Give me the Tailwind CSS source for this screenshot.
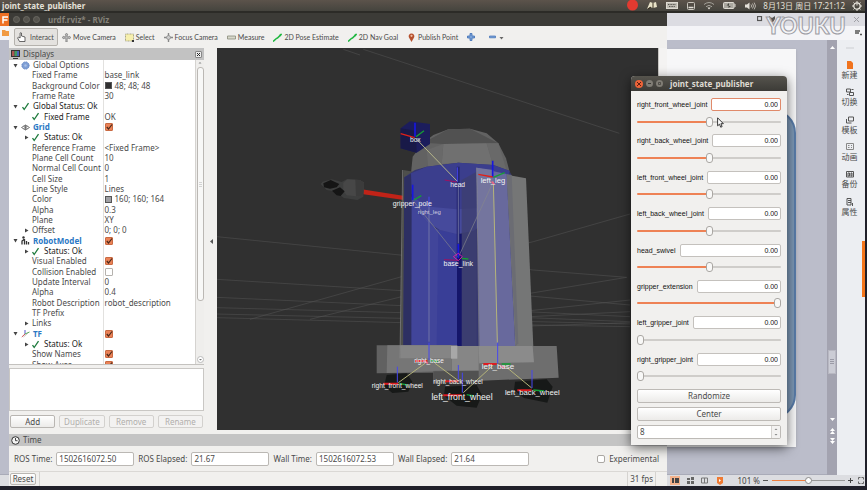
<!DOCTYPE html>
<html lang="en">
<head>
<meta charset="utf-8">
<title>joint_state_publisher</title>
<script src="https://cdn.jsdelivr.net/npm/@tailwindcss/browser@4"></script>
</head>
<body class="bg-[#20202a]">
<div class="relative flex min-h-screen flex-col overflow-hidden pr-[2px] pb-1 font-['Noto_Sans','Noto_Sans_CJK_SC',sans-serif] text-[8px] leading-[10px] text-[#4a4a4a]">

  <!-- system bar -->
  <header class="flex h-[13px] shrink-0 items-center justify-between border-b-2 border-[#2c2b27] bg-linear-to-b from-[#5c534b] to-[#45443e] pr-[3px] pl-[2px] text-[#e4e0d8]">
    <span class="font-bold">joint_state_publisher</span>
    <div class="flex items-center gap-[9px]">
      <svg class="size-[11px]" viewBox="0 0 11 11"><circle cx="5.500" cy="5" r="5.500" fill="#e23a30"/></svg>
      <svg class="h-[9px] w-[10px]" viewBox="0 0 10 9"><path d="M0 8 3 1l3 1 3-1 1 5-4 1-3-1z" fill="#e8e2c8"/><path d="M6 2v5M1 8l3-2" stroke="#3a3020"/></svg>
      <svg class="h-[7px] w-[12px]" viewBox="0 0 12 7"><rect x=".5" y=".5" width="11" height="6" fill="#bdbab2" stroke="#dedad2"/><path d="M2 2.500h8M3 4.500h6" stroke="#56534d" stroke-dasharray="1 .6"/></svg>
      <svg class="h-[8px] w-[8px]" viewBox="0 0 8 8"><rect x=".5" y=".5" width="7" height="7" rx="1" fill="none" stroke="#c9c5bd"/><path d="M1.500 5.500h5" stroke="#e2ded6" stroke-width="1.500"/></svg>
      <svg class="h-[8px] w-[10px]" viewBox="0 0 10 8"><path d="M0 2.500Q5-1.500 10 2.500M2 4.700Q5 2 8 4.700" fill="none" stroke="#a5a29a"/><path d="M3.500 5.500h3L5 7.500z" fill="#eeeae2"/></svg>
      <svg class="h-[7px] w-[13px]" viewBox="0 0 13 7"><rect x=".5" y=".5" width="10.500" height="6" rx="1" fill="#aaa79f" stroke="#dedad2"/><path d="M12 2v3" stroke="#dedad2"/><path d="M6 1v3h2L5.500 6V3.500h-2z" fill="#45443e"/></svg>
      <div class="flex items-center gap-[7px]">
        <svg class="h-[8px] w-[11px]" viewBox="0 0 11 8"><path d="M0 2.500h2L4.500.5v7L2 5.500H0z" fill="#e4e0d8"/><path d="M6 2.500q1.200 1.500 0 3M7.500 1.500q2 2.500 0 5M9.200.6q2.600 3.400 0 6.800" fill="none" stroke="#d0ccc4" stroke-width=".8"/></svg>
        <time class="whitespace-nowrap">8月13日 周日 17:21:12</time>
        <svg class="size-[10px]" viewBox="0 0 10 10"><circle cx="5" cy="5" r="3.200" fill="none" stroke="#e4e0d8" stroke-width="1.300"/><path d="M5 0v4.500M5 8v2M0 5h2M8 5h2M1.500 1.500l1.300 1.300M8.500 1.500 7.200 2.800M1.500 8.500l1.300-1.300M8.500 8.500 7.200 7.200" stroke="#e4e0d8"/></svg>
      </div>
    </div>
  </header>

  <!-- presentation editor behind the other windows -->
  <main class="flex flex-1 flex-col bg-[#bbbdca]">
    <div class="flex h-[13px] items-center justify-end bg-[#dcdce2]">
      <div class="mr-auto flex h-full w-[9px] items-center bg-[#ee7024]"><svg class="size-[9px]" viewBox="0 0 9 9"><path d="M3 8.500V2h5M3 5h4.500" fill="none" stroke="#fff" stroke-width="1.500"/></svg></div>
      <svg class="mr-[66px] h-[7px] w-[30px]" viewBox="0 0 30 7"><rect x=".5" y=".5" width="4" height="4" fill="none" stroke="#555" stroke-width="1.200"/><path d="M12 0l3 2 3-2v3l-2 3h-2l-2-3z" fill="#555"/><path d="M25 1q3-1 3 2l-2 2" stroke="#999" fill="none"/></svg>
      <button class="mr-[5px] text-[#a0a0a6]" aria-label="Close"><svg class="size-[7px]" viewBox="0 0 7 7"><path d="M1 1l5 5M6 1 1 6" stroke="currentColor"/></svg></button>
    </div>
    <div class="flex h-[14px] items-center justify-between bg-[#f4f4f7]">
      <svg class="ml-[2px] h-[6px] w-[7px]" viewBox="0 0 7 6"><path d="M0 0h3l1 1h3v5H0z" fill="#f19a43"/></svg>
      <svg class="mr-[3px] h-[6px] w-[7px]" viewBox="0 0 7 6"><path d="M0 1h5M0 3h4M5 4.500h2" stroke="#555" stroke-width="1.400"/></svg>
    </div>
    <div class="flex flex-1">
      <div class="flex flex-1 justify-end border-b border-[#a9abb8] pt-[9px] pr-[31px]">
        <div class="h-[398px] w-[140px] overflow-hidden bg-[#f7f7f8] pt-[60px] shadow">
          <div class="ml-auto h-[310px] w-[134px] rounded-r-[24px] border-2 border-[#587ba8] bg-[#7c97b4]"></div>
        </div>
      </div>
      <div class="flex w-[10px] flex-col items-center bg-[#a3a3b0] pt-[6px]">
        <svg class="h-[3px] w-[5px]" viewBox="0 0 5 3"><path d="M0 3 2.500 0 5 3z" fill="#fff"/></svg>
        <div class="mt-[301px] flex h-[24px] w-[8px] items-center justify-center border border-[#b8b8c2] bg-[#cbccd5]"><svg class="h-[6px] w-[4px]" viewBox="0 0 4 6"><path d="M0 .5h4M0 2.500h4M0 4.500h4" stroke="#9a9aa6"/></svg></div>
        <svg class="mt-[44px] h-[26px] w-[5px]" viewBox="0 0 5 26"><path d="M0 0h5L2.500 3zM0 13l2.500-3L5 13zM0 16l2.500-3L5 16zM0 20h5L2.500 23zM0 23h5l-2.500 3z" fill="#fff"/></svg>
      </div>
      <aside class="relative flex w-[28px] flex-col bg-[#eceef2] pt-[7px] pr-[3px]">
        <div class="mx-auto mb-[6px] h-[2px] w-[8px] bg-[#dcdee2]"></div>
        <nav id="side" class="grid h-[164px] auto-rows-fr text-center text-[#4a4a4a]"></nav>
        <div class="absolute top-[201px] right-0 h-[56px] w-[3px] bg-[#f5761b]"></div>
      </aside>
    </div>
    <div class="flex h-[11px] items-center justify-end bg-[#dcdde1]">
      <svg class="mr-[14px] h-[9px] w-[54px]" viewBox="0 0 54 9"><path d="M0 0h10v9H0z" fill="#f4b28c"/><path d="M2 2h2v5H2zM5 2h4v5H5z" fill="#444"/><path d="M17 2h3v2h-3zM21 1h3v3h-3zM17 5h3v3h-3zM21 5h3v3h-3z" fill="#666"/><path d="M31.500 2h6v5h-6zM34.500 2v5" fill="none" stroke="#777"/><path d="M47 1h6v6l-3 2-3-2z" fill="#ef7a33"/><path d="M49 3v3l2-1.500z" fill="#fff"/></svg>
      <span class="mr-[3px] text-[#444]">101 %</span>
      <svg class="mr-[4px] h-[7px] w-[5px]" viewBox="0 0 5 7"><path d="M0 3.500h5" stroke="#555"/></svg>
      <input type="range" value="50" aria-label="Zoom" class="h-[8px] w-[73px] appearance-none bg-transparent [&::-webkit-slider-runnable-track]:h-px [&::-webkit-slider-runnable-track]:bg-linear-to-r [&::-webkit-slider-runnable-track]:from-[#ef7f40] [&::-webkit-slider-runnable-track]:from-50% [&::-webkit-slider-runnable-track]:to-[#999] [&::-webkit-slider-runnable-track]:to-50% [&::-webkit-slider-thumb]:-mt-[3px] [&::-webkit-slider-thumb]:size-[7px] [&::-webkit-slider-thumb]:appearance-none [&::-webkit-slider-thumb]:rounded-full [&::-webkit-slider-thumb]:border [&::-webkit-slider-thumb]:border-[#888] [&::-webkit-slider-thumb]:bg-white">
      <svg class="mr-[1px] ml-[3px] h-[7px] w-[16px]" viewBox="0 0 16 7"><path d="M0 3.500h5M2.500 1v5" stroke="#444"/><path d="M10.500 2.500v-2h2M13.500.5h2v2M15.500 4.500v2h-2M12.500 6.500h-2v-2" fill="none" stroke="#666"/></svg>
    </div>
  </main>

  <!-- RViz window -->
  <section class="absolute top-[13px] right-[200px] bottom-1 left-[9px] flex flex-col bg-[#f1f0ee]">
    <div class="flex h-[13px] shrink-0 items-center gap-[3px] bg-[#3c3b37] pl-[4px] font-bold text-[#85827a]">
      <button aria-label="Close" class="flex size-[7px] items-center justify-center rounded-full border border-[#6a6861] bg-[#55534d]"></button>
      <button aria-label="Minimize" class="flex size-[7px] items-center justify-center rounded-full border border-[#6a6861] bg-[#55534d]"></button>
      <button aria-label="Maximize" class="flex size-[7px] items-center justify-center rounded-full border border-[#6a6861] bg-[#55534d]"></button>
      <h1 class="ml-[5px]">urdf.rviz* - RViz</h1>
    </div>

    <div class="flex h-[22px] shrink-0 items-center gap-[9px] pl-[5px] font-[Lato,sans-serif] text-[7px] whitespace-nowrap">
      <button class="-mr-[5px] flex h-[18px] w-[44px] items-center gap-[4px] rounded-[2px] border border-[#b5b2ad] bg-[#e4e2df] pl-[2px]"><svg class="h-[10px] w-[9px]" viewBox="0 0 9 10"><path d="M2.500 9.500h5.500V5L4.500 4V1q-.7-1-1.400 0v5L1.500 5 .6 6z" fill="#fff" stroke="#444" stroke-width=".8"/></svg>Interact</button>
      <button class="flex items-center gap-[2px]"><svg class="size-[9px]" viewBox="0 0 9 9"><path d="M4.500 0 6 2H5.200v1.800H7V3l2 1.500L7 6v-.8H5.200V9H3.800V5.200H2V6L0 4.500 2 3v.8h1.800V2H3z" fill="#bbb" stroke="#777" stroke-width=".6"/></svg>Move Camera</button>
      <button class="flex items-center gap-[2px]"><svg class="size-[9px]" viewBox="0 0 9 9"><path d="M.5 1h8v7h-8z" fill="#f6efad" stroke="#8d8a68" stroke-width=".7" stroke-dasharray="1 .5"/><path d="M7 7h2v2H7z" fill="#333"/></svg>Select</button>
      <button class="flex items-center gap-[2px]"><svg class="size-[9px]" viewBox="0 0 9 9"><path d="M4.500 0v9M0 4.500h9" stroke="#888" stroke-width="1.400"/><circle cx="4.500" cy="4.500" r="2" fill="#ccc" stroke="#888" stroke-width=".7"/></svg>Focus Camera</button>
      <button class="flex items-center gap-[2px]"><svg class="size-[9px]" viewBox="0 0 9 9"><path d="M.5 3h8v3h-8z" fill="#d8d8cc" stroke="#888a78" stroke-width=".8"/></svg>Measure</button>
      <button class="flex items-center gap-[2px]"><svg class="size-[9px]" viewBox="0 0 9 9"><path d="M0 8.500 4 5M4 5.500 8.500 1" stroke="#20b840" stroke-width="1.600"/><path d="M9 .5 6 2l1.500 1.500z" fill="#20b840"/></svg>2D Pose Estimate</button>
      <button class="flex items-center gap-[2px]"><svg class="size-[9px]" viewBox="0 0 9 9"><path d="M0 8.500 4 5M4 5.500 8.500 1" stroke="#20b840" stroke-width="1.600"/><path d="M9 .5 6 2l1.500 1.500z" fill="#20b840"/></svg>2D Nav Goal</button>
      <button class="flex items-center gap-[2px]"><svg class="size-[9px]" viewBox="0 0 9 9"><path d="M4.500 9 2 4.500a2.800 2.800 0 1 1 5 0z" fill="#b5502d"/><circle cx="4.500" cy="2.800" r="1.100" fill="#f0c0a8"/></svg>Publish Point</button>
      <button aria-label="Add tool"><svg class="size-[8px]" viewBox="0 0 8 8"><path d="M3 .5h2V3h2.500v2H5v2.500H3V5H.5V3H3z" fill="#7aa2d8" stroke="#3f6fb5" stroke-width=".8"/></svg></button>
      <button aria-label="Remove tool" class="ml-[5px]"><svg class="h-[6px] w-[15px]" viewBox="0 0 15 6"><path d="M.5 2h6v1.800h-6z" fill="#7aa2d8" stroke="#3f6fb5" stroke-width=".7"/><path d="M10.500 3h4l-2 2.500z" fill="#666"/></svg></button>
    </div>

    <div class="flex min-h-0 flex-1">
      <div class="flex w-[195px] shrink-0 flex-col">
        <div class="flex h-[12px] items-center gap-[3px] bg-[#c2c2c2] px-[2px]">
          <svg class="h-[9px] w-[9px]" viewBox="0 0 9 9"><path d="M0 0h9v7H0z" fill="#333"/><path d="M1 1h2.500v5H1z" fill="#a55"/><path d="M3.500 1H6v5H3.500z" fill="#3f9a65"/><path d="M6 1h2v5H6z" fill="#4b62b8"/><path d="M2 8.500h5" stroke="#333"/></svg>
          <h2 class="mr-auto">Displays</h2>
          <button aria-label="Close panel" class="flex size-[7px] items-center justify-center rounded-[1px] border border-[#888] bg-[#eee]"><svg class="size-[3px]" viewBox="0 0 3 3"><path d="M0 0l3 3M3 0 0 3" stroke="#222"/></svg></button>
        </div>
        <div class="flex h-[305px] overflow-hidden border-b border-[#c4c2bf] bg-white">
          <div class="min-w-0 flex-1"><table class="h-[310px] w-full table-fixed border-collapse"><tbody id="tree"></tbody></table></div>
          <div class="flex w-[9px] flex-col items-center gap-[2px] border-l border-[#d5d3d0] bg-[#efeeec] pb-[1px]">
            <svg class="h-[5px] w-[6px]" viewBox="0 0 6 5"><path d="M1.500 3.500 3 2l1.500 1.500z" fill="#888"/></svg>
            <div class="flex h-[234px] w-[7px] items-center justify-center rounded-[3px] border border-[#bbb8b4] bg-[#f8f8f7]"><svg class="h-[5px] w-[3px]" viewBox="0 0 3 5"><path d="M0 .5h3M0 2.500h3M0 4.500h3" stroke="#bbb" stroke-width=".6"/></svg></div>
            <svg class="mt-auto size-[7px]" viewBox="0 0 7 7"><circle cx="3.500" cy="3.500" r="3" fill="#fff" stroke="#bbb"/><path d="M2 3h3L3.500 4.600z" fill="#777"/></svg>
          </div>
        </div>
        <div class="mt-[3px] flex-1 border border-[#c9c7c4] bg-white"></div>
        <div class="mt-[4px] mb-[6px] grid h-[13px] shrink-0 grid-cols-4 gap-[4px] px-[1px] text-[#b0aeab]">
          <button class="rounded-[2px] border border-[#b9b6b2] bg-linear-to-b from-white to-[#ecebe9] text-[#4a4a4a]">Add</button>
          <button disabled class="rounded-[2px] border border-[#d3d1ce] bg-[#f3f2f1]">Duplicate</button>
          <button disabled class="rounded-[2px] border border-[#d3d1ce] bg-[#f3f2f1]">Remove</button>
          <button disabled class="rounded-[2px] border border-[#d3d1ce] bg-[#f3f2f1]">Rename</button>
        </div>
      </div>
      <div class="flex w-[13px] shrink-0 items-center justify-center"><svg class="ml-[2px] h-[5px] w-[3px]" viewBox="0 0 3 5"><path d="M3 0v5L0 2.500z" fill="#555"/></svg></div>

      <!-- 3D view -->
      <div class="mb-[4px] min-w-0 flex-1 bg-[#303030]">
        <svg class="size-full" viewBox="21 24 1323 1146" preserveAspectRatio="xMidYMid slice" font-family="Liberation Sans, sans-serif" text-anchor="middle">
          <g stroke="#585858" stroke-width="2" fill="none">
            <path d="M460 28 1228 280M400 28 450 45M20 590 600 648 970 690 1250 712M760 655 970 605 1260 522M20 718 575 752 960 768 1260 795M20 772 575 797 1260 830M20 803 575 818 1260 845M20 822 575 835 1260 852M20 833 575 848 1260 860M120 838 575 710M300 838 575 770M960 760 1250 712M960 812 1260 780M960 830 1260 815M960 858 1260 848" opacity=".75"/>
          </g>
          <!-- gripper -->
          <path d="M455 448 608 472v12L455 462z" fill="#c02318"/>
          <path d="M338 425 365 418l30 8 15-8 40 2 12 8-2 42-18 10-40-6-30-20-22-4-18-18z" fill="#3d3e3e"/>
          <path d="M400 428 412 418l38 2 12 8-2 34-8 8-42-4-10-14z" fill="#474747"/>
          <path d="M436 420l14 0 12 8-2 34-8 8-14-1z" fill="#3b3b3b"/>
          <path d="M340 430l22-10 26 12-8 10-20 4-18-4zM366 452l24-10 14 12-12 14-12-2z" fill="#151515"/>
          <!-- wheels -->
          <g fill="#171918"><path d="M530 1005 590 1000l17 25-12 30-48 4-25-20z"/><path d="M705 1040 800 1035l16 30-16 38-60-6-38-30z"/><path d="M915 1025 1010 1018l18 22-16 48-70-14-30-24z"/></g>
          <!-- head dome -->
          <path d="M603 400 608 350 640 308 670 285 715 268 780 266 830 280 865 310 888 355 900 400 890 450 870 500 840 545 790 572 740 582 690 570 650 545 620 510 605 460z" fill="#626262"/>
          <path d="M640 308 715 268 780 266 865 310 700 312z" fill="#515151"/>
          <path d="M700 312 830 310 850 378 745 368 695 372z" fill="#707070"/>
          <path d="M650 330 700 312 695 372 655 385zM830 310 865 310 890 392 850 378z" fill="#696969"/>
          <!-- right leg behind the body -->
          <path d="M580 390 610 395 605 955 570 955z" fill="#4e4f4c"/>
          <!-- body -->
          <path d="M583 412 615 390 650 380 745 368 850 375 898 392 912 420 918 918H580z" fill="#35376f"/>
          <path d="M583 412 640 384 608 918H580z" fill="#2d2f62"/>
          <path d="M605 470 625 520 680 568 745 582V918H604z" fill="#41459a"/>
          <path d="M685 570 742 582V918H680z" fill="#393e97"/>
          <path d="M603 400 650 380 745 368 850 375 898 392 890 450 870 500 840 545 790 572 740 582 690 570 650 545 620 510 605 460z" fill="#3b3e8d"/>
          <path d="M605 470 660 500 740 508 800 505 850 530 790 572 740 582 690 570 650 545 620 510z" fill="#464a9c"/>
          <path d="M755 420 800 395V918H755z" fill="#3d3e70" opacity=".8"/>
          <path d="M741 582h14V918h-14z" fill="#15166a"/>
          <path d="M740 380h9V640h-9z" fill="#252773"/>
          <!-- left leg -->
          <path d="M890 404 948 415 972 967 918 968z" fill="#757676"/>
          <path d="M800 383 890 402 918 968 810 970z" fill="#68699d"/>
          <path d="M800 383 850 390 865 968 810 970z" fill="#74759e"/>
          <path d="M890 402 905 405 925 910 918 918z" fill="#6b6c73"/>
          <!-- bases -->
          <path d="M500 916H725V990L670 998 500 1000z" fill="#616161"/>
          <path d="M532 916H725V992L530 999z" fill="#767676"/>
          <path d="M572 916H742V955H572z" fill="#858585"/>
          <path d="M725 918 1040 918 1046 1013 670 1028V992L725 990z" fill="#6e6e6e"/>
          <path d="M725 918H806V992H725z" fill="#868686"/>
          <path d="M806 918H968L972 967 808 970z" fill="#8b8b8b"/>
          <path d="M723 918H742V956H723z" fill="#a8a8a8"/>
          <path d="M670 994 806 992V1022L670 1028z" fill="#515151"/>
          <path d="M570 955 578 390M800 383 808 970" stroke="#8c8c8c" stroke-width="2" fill="none"/>
          <!-- box on the head -->
          <path d="M572 265 600 244 660 252V312L620 338 572 325z" fill="#1c1d5c"/>
          <path d="M572 265 618 272 620 338 572 325z" fill="#181948"/>
          <!-- frame links -->
          <g fill="none" stroke-width="3">
            <path d="M620 298 742 424" stroke="#b5b58a"/>
            <path d="M850 425 862 908M565 1028 645 970M675 970 745 1022M760 1058 850 975M885 978 965 1044" stroke="#b5b47a"/>
            <path d="M612 485 745 652 850 425" stroke="#85868c" stroke-width="2"/>
            <path d="M657 500V905M745 430V610" stroke="#8a8cb0" stroke-width="2"/>
          </g>
          <!-- axes -->
          <g fill="none" stroke-width="5">
            <path d="M615 248V290M608 434V480M848 362V412M745 612V655" stroke="#1717e0"/>
            <path d="M742 382V425M657 470V500M657 908V960M863 908V970M562 980V1028M757 998V1058M966 990V1044M745 975V1018" stroke="#4646ee" stroke-width="3"/>
            <path d="M572 281 614 293M805 403 848 411" stroke="#e02018" stroke-width="4"/>
            <path d="M520 1031H565M700 1066H755M922 1051H965M705 1024H745M820 972H860M615 963H652" stroke="#dc1c22" stroke-width="6"/>
            <path d="M702 659 745 661M704 420 740 426" stroke="#a01060" stroke-width="3"/>
            <path d="M730 650l15-10 12 10-12 12z" stroke="#d020a8" stroke-width="3"/>
            <path d="M618 290 642 272M612 480 634 467M850 412 884 398M755 655 775 657M567 1030 592 1035M770 1064 792 1068M970 1050 1002 1053M875 972H902M662 962 684 964" stroke="#159e35" stroke-width="4"/>
            <path d="M845 425l8 8M640 962l14 8M870 978l14 6" stroke="#ea6088"/>
          </g>
          <g fill="#f2f2f2">
            <text x="616" y="306" font-size="20">box</text>
            <text x="743" y="441" font-size="20">head</text>
            <text x="849" y="429" font-size="23">left_leg</text>
            <text x="607" y="497" font-size="21">gripper_pole</text>
            <text x="658" y="521" font-size="18" fill="#d0d0e0">right_leg</text>
            <text x="745" y="677" font-size="21">base_link</text>
            <text x="657" y="970" font-size="19">right_base</text>
            <text x="864" y="986" font-size="24">left_base</text>
            <text x="562" y="1043" font-size="20">right_front_wheel</text>
            <text x="744" y="1033" font-size="19">right_back_wheel</text>
            <text x="756" y="1081" font-size="26">left_front_wheel</text>
            <text x="967" y="1066" font-size="23">left_back_wheel</text>
          </g>
        </svg>
      </div>
      <div class="w-[9px] shrink-0 border-l border-[#c9c7c4] bg-[#f4f3f2]"></div>
    </div>

    <div class="flex h-[12px] shrink-0 items-center gap-[3px] bg-[#c4c4c4] pl-[2px]">
      <svg class="size-[9px]" viewBox="0 0 9 9"><circle cx="4.500" cy="4.500" r="3.800" fill="#f4f4f4" stroke="#333"/><path d="M4.500 2v2.700h2" fill="none" stroke="#333" stroke-width=".9"/></svg>
      <h2>Time</h2>
    </div>
    <div class="flex h-[26px] shrink-0 items-center gap-[4px] border-b border-[#dad8d5] pr-[8px] pl-[5px] whitespace-nowrap">
      <label for="rt">ROS Time:</label><input id="rt" value="1502616072.50" class="h-[14px] w-[78px] rounded-[2px] border border-[#bbb8b4] bg-white px-[2px]">
      <label for="re">ROS Elapsed:</label><input id="re" value="21.67" class="h-[14px] w-[78px] rounded-[2px] border border-[#bbb8b4] bg-white px-[2px]">
      <label for="wt">Wall Time:</label><input id="wt" value="1502616072.53" class="h-[14px] w-[78px] rounded-[2px] border border-[#bbb8b4] bg-white px-[2px]">
      <label for="we">Wall Elapsed:</label><input id="we" value="21.64" class="h-[14px] w-[78px] rounded-[2px] border border-[#bbb8b4] bg-white px-[2px]">
      <input id="ex" type="checkbox" class="ml-auto size-[8px] appearance-none rounded-[2px] border border-[#aaa7a3] bg-white"><label for="ex">Experimental</label>
    </div>
    <div class="flex h-[14px] shrink-0 items-center justify-between pr-[11px] pl-[1px]">
      <button class="h-[12px] w-[26px] rounded-[2px] border border-[#b9b6b2] bg-linear-to-b from-white to-[#ecebe9]">Reset</button>
      <div class="ml-[3px] h-full flex-1 border-l border-[#d5d3d0]"></div>
      <output class="flex h-full items-center border-x border-[#d5d3d0] px-[2px]">31 fps</output>
    </div>
  </section>

  <!-- joint_state_publisher window -->
  <section class="absolute top-[76px] right-[80px] flex w-[156px] flex-col rounded-t-[4px] bg-[#f1f0ee] shadow-[0_3px_12px_rgba(0,0,0,0.6)]">
    <div class="flex h-[15px] items-center gap-[3px] rounded-t-[4px] bg-linear-to-b from-[#56544d] to-[#3c3b37] pl-[4px] font-bold text-[#dfdbd2]">
      <button aria-label="Close" class="flex size-[8px] items-center justify-center rounded-full bg-[#ee6338]"><svg class="size-[4px]" viewBox="0 0 4 4"><path d="M0 0l4 4M4 0 0 4" stroke="#5a2010"/></svg></button>
      <button aria-label="Minimize" class="flex size-[7px] items-center justify-center rounded-full bg-[#807d75]"><svg class="size-[3px]" viewBox="0 0 3 3"><path d="M0 1.500h3" stroke="#3c3b37"/></svg></button>
      <button aria-label="Maximize" class="flex size-[7px] items-center justify-center rounded-full bg-[#807d75]"><svg class="size-[3px]" viewBox="0 0 3 3"><path d="M.5.5h2v2h-2z" fill="none" stroke="#3c3b37" stroke-width=".7"/></svg></button>
      <h2 class="ml-[4px]">joint_state_publisher</h2>
    </div>
    <form class="flex flex-col px-[6px] pt-[7px] pb-[6px]">
      <div id="joints" class="grid h-[291px] auto-rows-fr grid-cols-1 font-['Liberation_Sans',sans-serif] text-[7px] leading-[9px] text-[#111]"></div>
      <button type="button" class="h-[14px] rounded-[2px] border border-[#bdbab6] bg-linear-to-b from-white to-[#ecebe9]">Randomize</button>
      <button type="button" class="mt-[4px] h-[14px] rounded-[2px] border border-[#bdbab6] bg-linear-to-b from-white to-[#ecebe9]">Center</button>
      <div class="mt-[4px] flex h-[14px] overflow-hidden rounded-[2px] border border-[#bdbab6] bg-white">
        <input aria-label="Randomize count" value="8" class="min-w-0 flex-1 px-[2px]">
        <div class="flex w-[9px] flex-col items-center justify-center gap-[3px] border-l border-[#d5d3d0] bg-[#f3f2f1]"><svg class="h-[8px] w-[4px]" viewBox="0 0 4 8"><path d="M.5 2 2 .5 3.500 2zM.5 6h3L2 7.500z" fill="#888"/></svg></div>
      </div>
    </form>
  </section>

  <!-- mouse pointer -->
  <svg class="absolute top-[117px] right-[143px] h-[11px] w-[7px]" viewBox="0 0 7 11"><path d="M.6.8v8l1.900-1.600 1.200 3 1.400-.6-1.200-2.900h2.500z" fill="#fff" stroke="#222" stroke-width=".9"/></svg>

  <!-- video watermark -->
  <svg class="absolute top-[12px] right-[16px] h-[28px] w-[90px]" viewBox="0 0 90 28"><text x="45" y="22" text-anchor="middle" font-family="Lato, sans-serif" font-size="22" font-weight="900" fill="#f4f4f6" fill-opacity=".7" stroke="#9b9ba3" stroke-width="1">YOUKU</text></svg>
</div>

<script>
// [kind, label, value, swatch or icon, heading classes]
const rows = [
  ["group","Global Options","","gear","text-[#4a4a4a]"],
  ["leaf","Fixed Frame","base_link"],
  ["leaf","Background Color","48; 48; 48","bg-[#303030]"],
  ["leaf","Frame Rate","30"],
  ["group","Global Status: Ok","","check","text-[#222]"],
  ["ok","Fixed Frame","OK"],
  ["group","Grid",true,"grid","font-bold text-[#2a78c4]"],
  ["status","Status: Ok",""],
  ["leaf","Reference Frame","<Fixed Frame>"],
  ["leaf","Plane Cell Count","10"],
  ["leaf","Normal Cell Count","0"],
  ["leaf","Cell Size","1"],
  ["leaf","Line Style","Lines"],
  ["leaf","Color","160; 160; 164","bg-[#a0a0a4]"],
  ["leaf","Alpha","0.3"],
  ["leaf","Plane","XY"],
  ["fold","Offset","0; 0; 0"],
  ["group","RobotModel",true,"robot","font-bold text-[#2a78c4]"],
  ["status","Status: Ok",""],
  ["leaf","Visual Enabled",true],
  ["leaf","Collision Enabled",false],
  ["leaf","Update Interval","0"],
  ["leaf","Alpha","0.4"],
  ["leaf","Robot Description","robot_description"],
  ["leaf","TF Prefix",""],
  ["fold","Links",""],
  ["group","TF",true,"tf","font-bold text-[#2a78c4]"],
  ["status","Status: Ok",""],
  ["leaf","Show Names",true],
  ["leaf","Show Axes",true]
];
const icons = {
  gear: '<svg class="size-[9px]" viewBox="0 0 9 9"><circle cx="4.500" cy="4.500" r="3.600" fill="#7f9fd4" stroke="#5c7fc0" stroke-width="1" stroke-dasharray="1.200 .7"/><circle cx="4.500" cy="4.500" r="1.200" fill="#a9c0e6"/></svg>',
  check: '<svg class="size-[9px]" viewBox="0 0 9 9"><path d="M1.500 5.200 3.200 7.500 7.500 1.200" fill="none" stroke="#1d7a3c" stroke-width="1.300"/></svg>',
  grid: '<svg class="size-[9px]" viewBox="0 0 9 9"><path d="M.5 4.500 4.500 2l4 2.500-4 2.500zM2.500 3.200l4 2.500M6.500 3.200l-4 2.500M4.500 2v5" fill="none" stroke="#6a6a6a" stroke-width=".9"/></svg>',
  robot: '<svg class="size-[9px]" viewBox="0 0 9 9"><circle cx="2.500" cy="1.500" r="1.200" fill="#333"/><path d="M1 8.500V5l2-1.500M3.500 3v5.500M5.500 5v3.500M7.500 6v2.500" fill="none" stroke="#333" stroke-width="1.300"/></svg>',
  tf: '<svg class="size-[9px]" viewBox="0 0 9 9"><path d="M4 5V1" stroke="#55c" /><path d="M4 5 .8 8" stroke="#c55"/><path d="M4 5l4.500-2" stroke="#5a5"/><path d="M2.500 8 7 4" stroke="#999" stroke-width=".6"/></svg>'
};
const down = '<svg class="size-[5px]" viewBox="0 0 5 5"><path d="M.5 1h4l-2 3.500z" fill="#444"/></svg>';
const side = '<svg class="size-[5px]" viewBox="0 0 5 5"><path d="M1 .5v4l3.500-2z" fill="#444"/></svg>';
const esc = s => s.replace(/</g, "&lt;").replace(/>/g, "&gt;");
document.getElementById("tree").innerHTML = rows.map(([kind, name, val, extra, cls], i) => {
  const id = "p" + i;
  const tag = typeof val === "boolean" ? `<label for="${id}">${name}</label>` : `<span>${name}</span>`;
  let left;
  if (kind === "group") left = `<div class="flex h-[10px] items-center gap-[3px] pl-[4px] ${cls}">${down}${icons[extra]}${tag}</div>`;
  else if (kind === "status") left = `<div class="flex h-[10px] items-center gap-[2px] pl-[15px] text-[#222]">${side}${icons.check}<span class="pl-[2px]">${name}</span></div>`;
  else if (kind === "ok") left = `<div class="flex h-[10px] items-center gap-[2px] pl-[22px] text-[#222]">${icons.check}<span class="pl-[2px]">${name}</span></div>`;
  else if (kind === "fold") left = `<div class="flex h-[10px] items-center gap-[3px] pl-[15px]">${side}${tag}</div>`;
  else left = `<div class="flex h-[10px] items-center pl-[23px]">${tag}</div>`;
  let right;
  if (typeof val === "boolean") right = `<span class="grid size-[8px] place-items-center"><input id="${id}" type="checkbox" ${val ? "checked" : ""} class="peer col-start-1 row-start-1 size-[8px] appearance-none rounded-[1px] border border-[#b5b2ae] bg-white checked:border-[#c96a42] checked:bg-[#ea8257]"><svg class="pointer-events-none col-start-1 row-start-1 hidden size-[8px] peer-checked:block" viewBox="0 0 8 8"><path d="M1.800 4 3.500 6 7 1.500" fill="none" stroke="#4a2a1c" stroke-width="1.200"/></svg></span>`;
  else right = (kind === "leaf" && extra ? `<i class="size-[7px] border border-[#555] ${extra}"></i>` : "") + `<span>${esc(val)}</span>`;
  return `<tr><td class="w-[94px] overflow-visible border-r border-[#e2e1df] p-0 whitespace-nowrap">${left}</td><td class="p-0 whitespace-nowrap"><div class="flex h-[10px] items-center gap-[3px] pl-[1px]">${right}</div></td></tr>`;
}).join("");

const half = "[&::-webkit-slider-runnable-track]:from-50% [&::-webkit-slider-runnable-track]:to-50%";
const full = "[&::-webkit-slider-runnable-track]:from-100% [&::-webkit-slider-runnable-track]:to-100%";
const none = "[&::-webkit-slider-runnable-track]:from-0% [&::-webkit-slider-runnable-track]:to-0%";
const joints = [["right_front_wheel_joint",50],["right_back_wheel_joint",50],["left_front_wheel_joint",50],["left_back_wheel_joint",50],["head_swivel",50],["gripper_extension",100],["left_gripper_joint",0],["right_gripper_joint",0]];
document.getElementById("joints").innerHTML = joints.map(([name, v], i) => `
  <div class="flex min-w-0 flex-col gap-[5px]">
    <div class="flex items-center gap-[4px]"><label for="${name}">${name}</label><input id="${name}" value="0.00" class="h-[13px] min-w-0 flex-1 rounded-[2px] border bg-white px-[2px] text-right ${i ? "border-[#c4c1bd]" : "border-[#e08a6a]"}"></div>
    <input type="range" value="${v}" aria-label="${name} position" class="h-[11px] w-full appearance-none bg-transparent [&::-webkit-slider-runnable-track]:h-[2px] [&::-webkit-slider-runnable-track]:rounded-full [&::-webkit-slider-runnable-track]:bg-linear-to-r [&::-webkit-slider-runnable-track]:from-[#ee8255] [&::-webkit-slider-runnable-track]:to-[#cfcdca] [&::-webkit-slider-thumb]:-mt-[4px] [&::-webkit-slider-thumb]:h-[10px] [&::-webkit-slider-thumb]:w-[7px] [&::-webkit-slider-thumb]:appearance-none [&::-webkit-slider-thumb]:rounded-[3px] [&::-webkit-slider-thumb]:border [&::-webkit-slider-thumb]:border-[#aaa7a3] [&::-webkit-slider-thumb]:bg-[#f8f8f7] ${v === 50 ? half : v ? full : none}">
  </div>`).join("");

const sideIcons = [
  ["新建", '<path d="M1 0h4l2 2v6H1z" fill="#f0731e"/>'],
  ["切换", '<path d="M.5 1h4v3h-4zM3.500 4.500h4v3h-4zM5.500 1.500h2M1 6.500h1.500" fill="none" stroke="#555"/>'],
  ["模板", '<path d="M2.500 1h5v4h-5zM.5 3v4h5" fill="none" stroke="#555"/>'],
  ["动画", '<path d="M.5.5h7v6h-7zM2 2.500h1.500M5 2.500h1M2 4.500h1.500M5 4.500h1" fill="none" stroke="#888"/>'],
  ["备份", '<path d="M.5 1.500h7v5.500h-7zM2 3h1.500v3H2zM5 3h1v3H5z" fill="none" stroke="#555"/>'],
  ["属性", '<path d="M1 .5h4v6.500H1zM2 2.500h3M2 4.500h3M6.500 5v3" fill="none" stroke="#555"/>']
];
document.getElementById("side").innerHTML = sideIcons.map(([t, p]) =>
  `<a href="#" class="flex flex-col items-center gap-[1px] pt-[6px]"><svg class="size-[8px]" viewBox="0 0 8 8">${p}</svg>${t}</a>`).join("");
</script>
</body>
</html>
